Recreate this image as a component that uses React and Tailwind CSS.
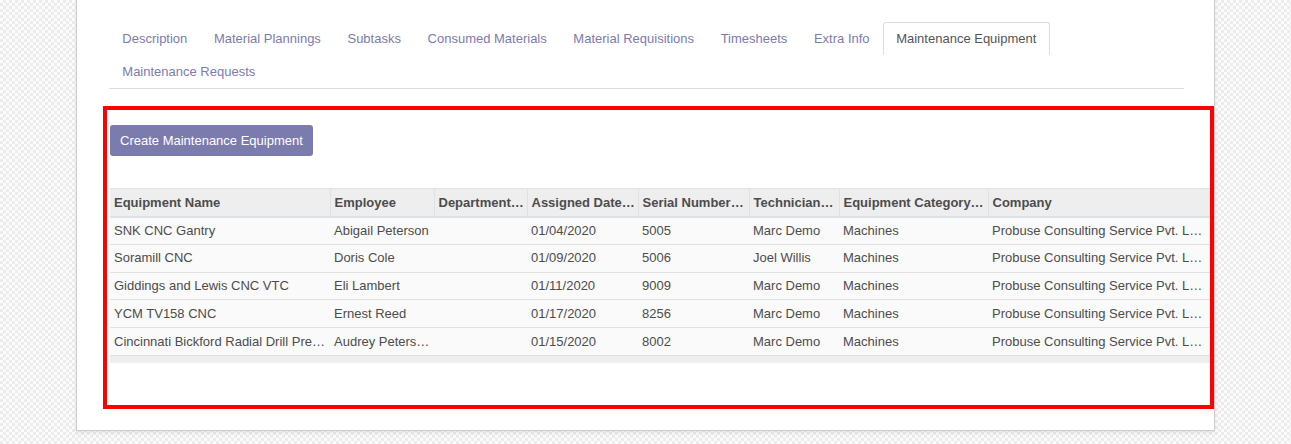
const TABS = [
  'Description',
  'Material Plannings',
  'Subtasks',
  'Consumed Materials',
  'Material Requisitions',
  'Timesheets',
  'Extra Info',
  'Maintenance Equipment',
  'Maintenance Requests'
];

const ACTIVE_TAB = 'Maintenance Equipment';

const COLUMNS = [
  { label: 'Equipment Name', width: 220 },
  { label: 'Employee', width: 104 },
  { label: 'Department…', width: 93 },
  { label: 'Assigned Date…', width: 111 },
  { label: 'Serial Number…', width: 111 },
  { label: 'Technician…', width: 90 },
  { label: 'Equipment Category…', width: 149 },
  { label: 'Company', width: 222 }
];

const ROWS = [
  ['SNK CNC Gantry', 'Abigail Peterson', '', '01/04/2020', '5005', 'Marc Demo', 'Machines', 'Probuse Consulting Service Pvt. L…'],
  ['Soramill CNC', 'Doris Cole', '', '01/09/2020', '5006', 'Joel Willis', 'Machines', 'Probuse Consulting Service Pvt. L…'],
  ['Giddings and Lewis CNC VTC', 'Eli Lambert', '', '01/11/2020', '9009', 'Marc Demo', 'Machines', 'Probuse Consulting Service Pvt. L…'],
  ['YCM TV158 CNC', 'Ernest Reed', '', '01/17/2020', '8256', 'Marc Demo', 'Machines', 'Probuse Consulting Service Pvt. L…'],
  ['Cincinnati Bickford Radial Drill Pre…', 'Audrey Peters…', '', '01/15/2020', '8002', 'Marc Demo', 'Machines', 'Probuse Consulting Service Pvt. L…']
];

function TabLink({ label }) {
  const active = label === ACTIVE_TAB;

  return (
    <div
      className={[
        'flex h-[33px] items-center whitespace-nowrap rounded-t-[3px] border px-[12.3px]',
        active
          ? 'border-[#dddddd] border-b-white bg-white text-[#555555]'
          : 'border-transparent text-[#7c7bad]'
      ].join(' ')}
    >
      {label}
    </div>
  );
}

function EquipmentTable() {
  return (
    <div className="w-[1100px] overflow-hidden">
      <table className="w-[1100px] table-fixed border-collapse text-[13px] text-[#4c4c4c]">
        <colgroup>
          {COLUMNS.map((col) => (
            <col key={col.label} style={{ width: col.width }} />
          ))}
        </colgroup>
        <thead>
          <tr className="h-[28px] border-t border-[#dee2e6] bg-[#eeeeee]">
            {COLUMNS.map((col, i) => (
              <th
                key={col.label}
                className={[
                  'overflow-hidden whitespace-nowrap border-b-2 border-[#dee2e6] px-[4px] text-left font-bold',
                  i < COLUMNS.length - 1 ? 'border-r border-r-[#dee2e6]' : ''
                ].join(' ')}
              >
                {col.label}
              </th>
            ))}
          </tr>
        </thead>
        <tbody>
          {ROWS.map((row, r) => (
            <tr key={r} className="h-[27.75px] border-b border-[#dee2e6] bg-[#fafafa]">
              {row.map((cell, i) => (
                <td key={i} className="overflow-hidden whitespace-nowrap px-[4px]">
                  {cell}
                </td>
              ))}
            </tr>
          ))}
        </tbody>
      </table>
      <div className="h-[7px] bg-[#eeeeee]" />
    </div>
  );
}

export default function App() {
  return (
    <div
      className="h-[444px] w-[1291px] overflow-hidden bg-[#f5f5f5] bg-[repeating-conic-gradient(#ececec_0_25%,#fbfbfb_0_50%)] bg-[length:6px_6px] text-[13px]"
      style={{ fontFamily: '"Liberation Sans", Arial, sans-serif' }}
    >
      <div className="ml-[76px] h-[431px] w-[1139px] border-x border-b border-[#cccccc] bg-white pt-[22px] pl-[32px] pr-[30px] shadow-[0_2px_4px_rgba(0,0,0,0.08)]">
        <div className="flex flex-wrap border-b border-[#dddddd] pr-[100px]">
          {TABS.map((tab) => (
            <TabLink key={tab} label={tab} />
          ))}
        </div>

        <div className="relative">
          <div className="pt-[36px]">
            <button
              type="button"
              className="ml-[1px] h-[31px] rounded-[3px] bg-[#7c7bad] px-[10px] text-[13px] text-white"
            >
              Create Maintenance Equipment
            </button>
          </div>

          <div className="ml-[1px] mt-[32px]">
            <EquipmentTable />
          </div>

          <div className="pointer-events-none absolute left-[-6px] top-[17px] h-[303px] w-[1111px] border-[4px] border-[#ff0000]" />
        </div>
      </div>
    </div>
  );
}
